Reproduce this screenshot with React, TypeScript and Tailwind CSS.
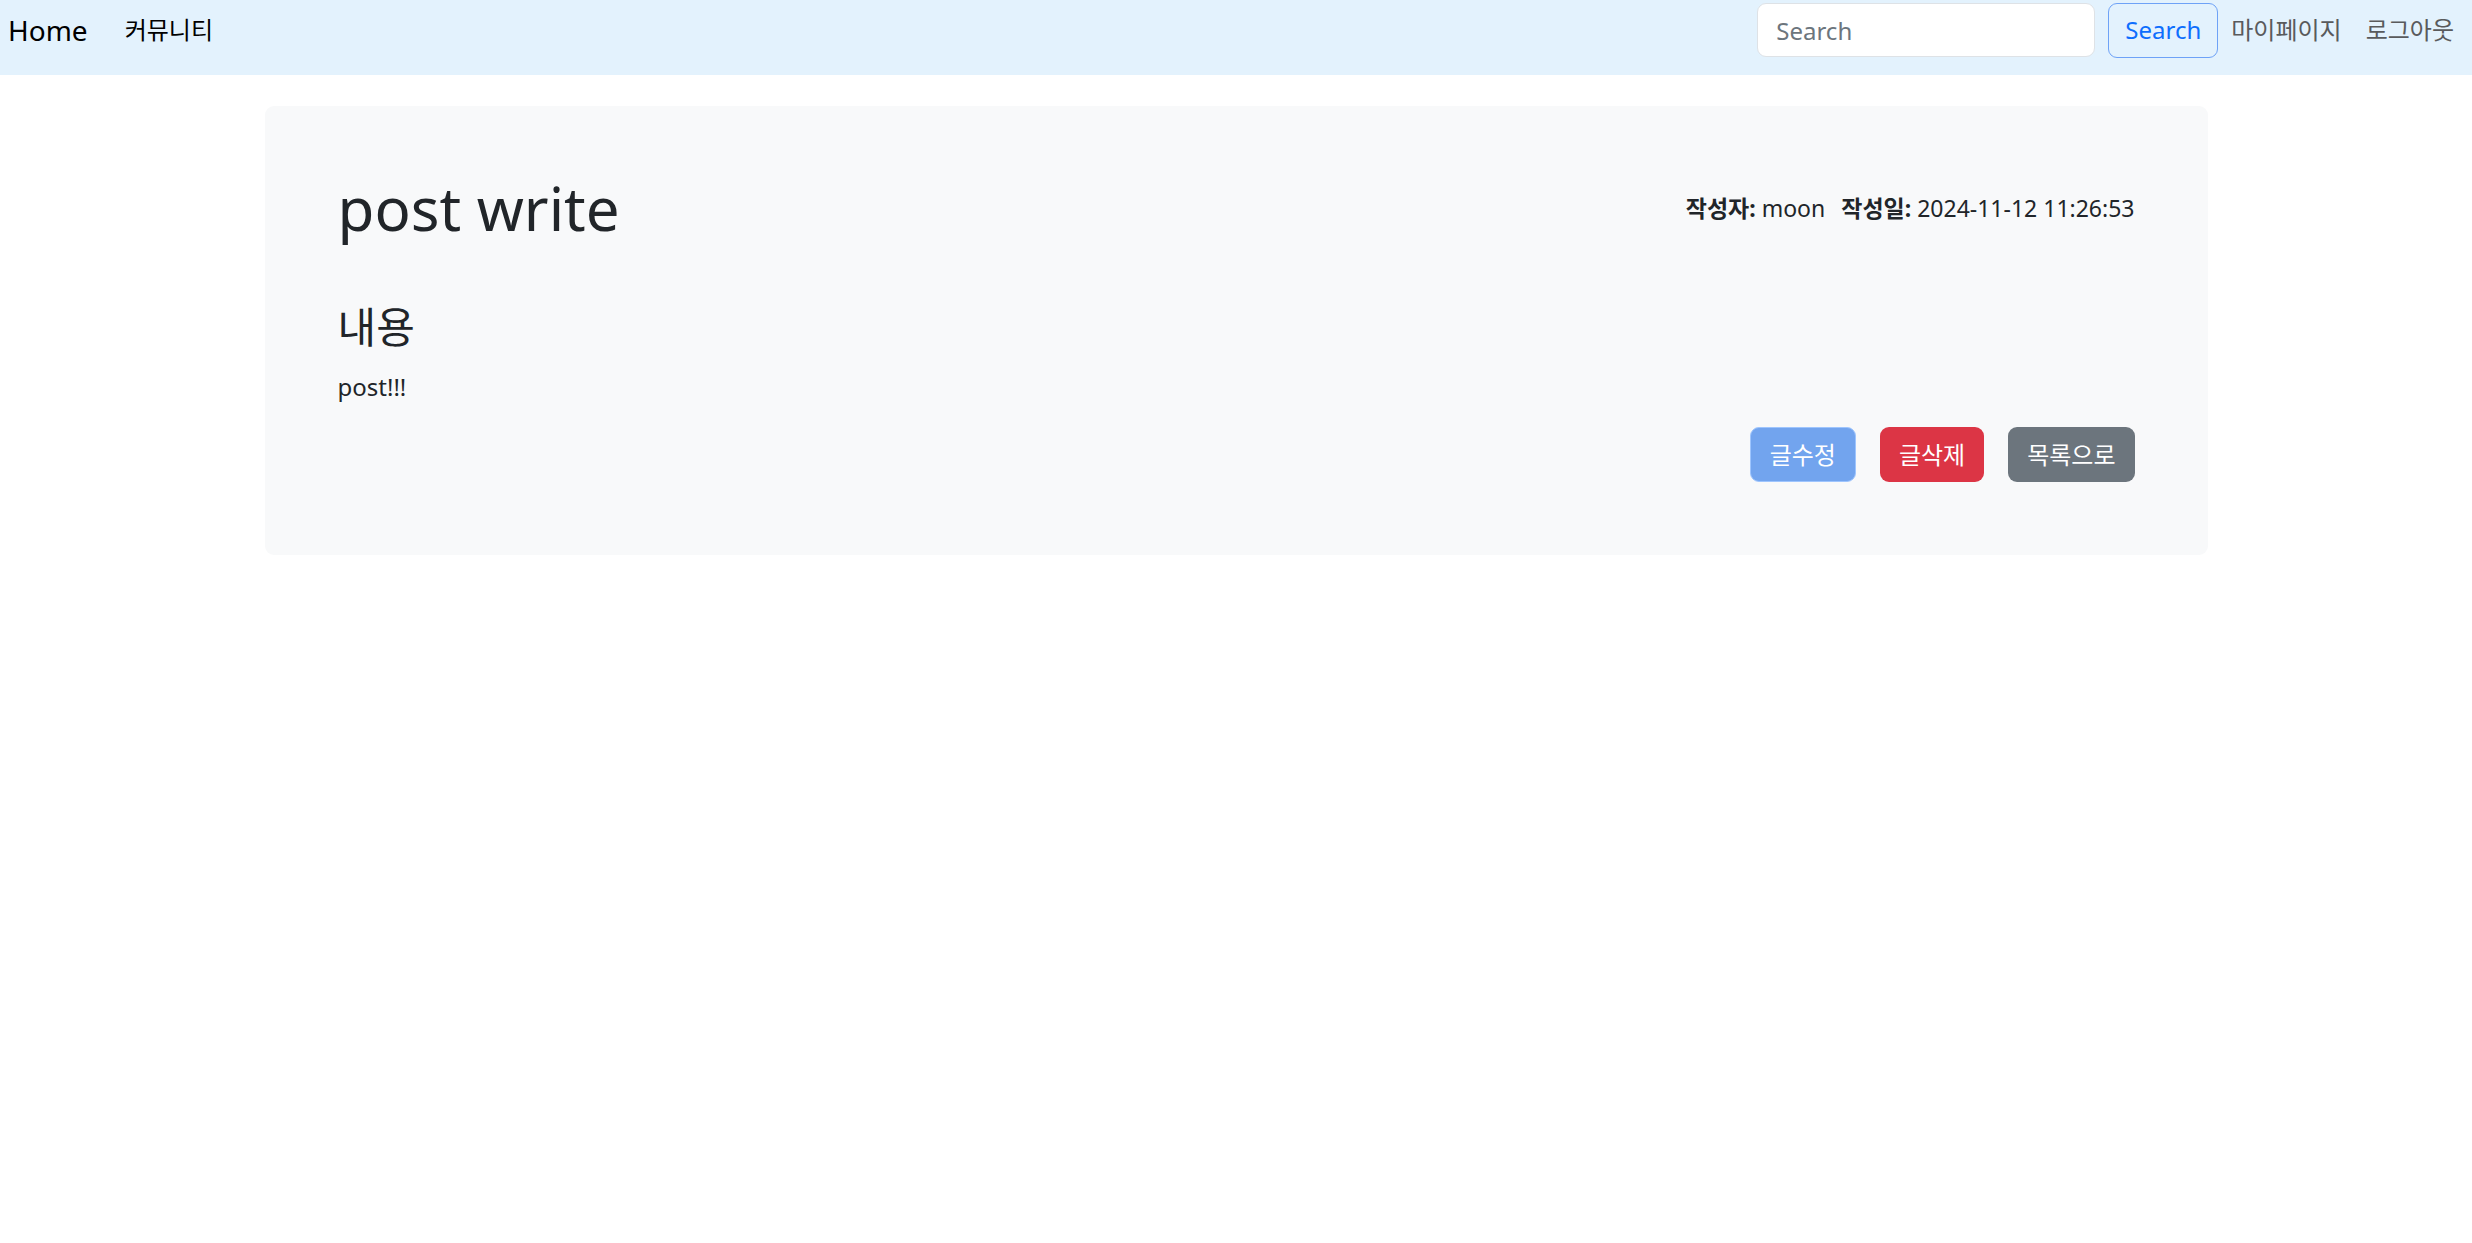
export default function App() {
  const font = { fontFamily: '"Noto Sans", "Noto Sans CJK KR", sans-serif' };
  return (
    <div style={font} className="min-h-screen bg-white text-[#212529] text-[24px]">
      <nav className="h-[75px] bg-[#e3f2fd] flex items-start justify-between pt-[3px]">
        <div className="flex items-center h-[54px] pl-[8px]">
          <a className="text-[28px] text-black leading-none">Home</a>
          <a className="ml-[37px] text-[24px] text-black leading-none">커뮤니티</a>
        </div>
        <div className="flex items-center h-[54px] pr-[18px]">
          <input
            placeholder="Search"
            className="w-[338px] h-[54px] bg-white border border-[#dee2e6] rounded-[9px] px-[18px] text-[24px] placeholder:text-[#6c757d] outline-none"
          />
          <button className="ml-[13px] w-[110px] h-[55px] border border-[#6ea2f7] rounded-[9px] text-[#0d6efd] text-[24px]">
            Search
          </button>
          <a className="ml-[13px] text-[#595a5c]">마이페이지</a>
          <a className="ml-[24px] text-[#595a5c]">로그아웃</a>
        </div>
      </nav>

      <main className="w-[1943px] mx-auto mt-[31px] bg-[#f8f9fa] rounded-[9px] px-[73px] pt-[66px] pb-[73px]">
        <div className="flex items-center justify-between">
          <h1 className="text-[60px] leading-[1.2]">post write</h1>
          <div className="flex items-center text-[23px]">
            <span className="font-bold">작성자:</span>
            <span className="ml-[6px]">moon</span>
            <span className="ml-[16px] font-bold">작성일:</span>
            <span className="ml-[6px]">2024-11-12 11:26:53</span>
          </div>
        </div>
        <h3 className="mt-[58px] text-[42px] leading-[1.2]">내용</h3>
        <p className="mt-[17px] leading-[1.5]">post!!!</p>
        <div className="flex justify-end gap-[24px] mt-[22px]">
          <button className="h-[55px] px-[19px] rounded-[9px] bg-[#72a4ee] border border-[#9ec5fe] text-white">글수정</button>
          <button className="h-[55px] px-[19px] rounded-[9px] bg-[#dc3545] text-white">글삭제</button>
          <button className="h-[55px] px-[19px] rounded-[9px] bg-[#6c757d] text-white">목록으로</button>
        </div>
      </main>
    </div>
  );
}
